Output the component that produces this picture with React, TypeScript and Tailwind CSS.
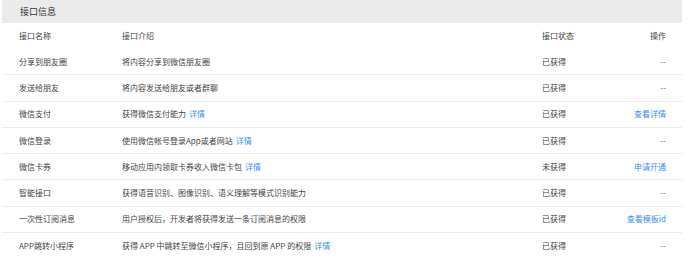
import React from 'react';

type Row = {
  name: string;
  intro: string;
  detail?: boolean;
  status: string;
  action?: string;
};

const rows: Row[] = [
  { name: '分享到朋友圈', intro: '将内容分享到微信朋友圈', status: '已获得' },
  { name: '发送给朋友', intro: '将内容发送给朋友或者群聊', status: '已获得' },
  { name: '微信支付', intro: '获得微信支付能力', detail: true, status: '已获得', action: '查看详情' },
  { name: '微信登录', intro: '使用微信帐号登录App或者网站', detail: true, status: '已获得' },
  { name: '微信卡券', intro: '移动应用内领取卡券收入微信卡包', detail: true, status: '未获得', action: '申请开通' },
  { name: '智能接口', intro: '获得语音识别、图像识别、语义理解等模式识别能力', status: '已获得' },
  { name: '一次性订阅消息', intro: '用户授权后，开发者将获得发送一条订阅消息的权限', status: '已获得', action: '查看模板id' },
  { name: 'APP跳转小程序', intro: '获得 APP 中跳转至微信小程序，且回到原 APP 的权限', detail: true, status: '已获得' },
];

function App() {
  return (
    <div className="w-[690px] h-[268px] bg-white px-[2px] text-[8px] text-[#444] font-['Noto_Sans_CJK_SC',sans-serif] overflow-hidden">
      {/* Title bar */}
      <div className="h-[23px] bg-[#ebebeb] flex items-center pl-[18px] text-[9px] text-[#333] w-[680px]">
        接口信息
      </div>

      <div className="w-[680px]">
        {/* Column header */}
        <div className="h-[26px] flex items-center pl-[17px] pr-[16px]">
          <div className="w-[103px]">接口名称</div>
          <div className="flex-1">接口介绍</div>
          <div className="w-[60px]">接口状态</div>
          <div className="w-[64px] text-right">操作</div>
        </div>

        {rows.map((row, i) => (
          <div
            key={i}
            className={`h-[26.3px] flex items-center pl-[17px] pr-[16px] ${i < rows.length - 1 ? 'border-b border-[#ececec]' : ''}`}
          >
            <div className="w-[103px]">{row.name}</div>
            <div className="flex-1">
              {row.intro}
              {row.detail && <span className="text-[#3b8ff5] ml-[3px]">详情</span>}
            </div>
            <div className="w-[60px]">{row.status}</div>
            <div className="w-[64px] text-right">
              {row.action ? <span className="text-[#3b8ff5]">{row.action}</span> : <span className="text-[#666]">--</span>}
            </div>
          </div>
        ))}
      </div>
    </div>
  );
}

export default App;
